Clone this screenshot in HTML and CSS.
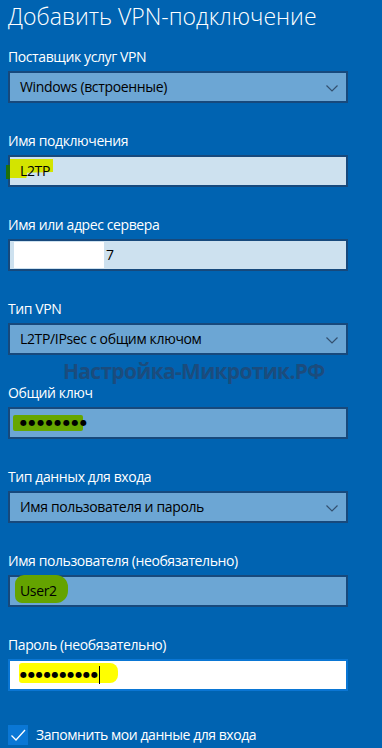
FILE: index.html
```html
<!DOCTYPE html>
<html lang="ru">
<head>
<meta charset="utf-8">
<title>Добавить VPN-подключение</title>
<link rel="stylesheet" href="styles.css">
</head>
<body>
<main class="page">
  <h1 class="title">Добавить VPN-подключение</h1>

  <div class="field">
    <div class="label">Поставщик услуг VPN</div>
    <div class="box select">
      <span class="value">Windows (встроенные)</span>
      <svg class="chev" width="12" height="7" viewBox="0 0 12 7"><path d="M0.5 0.5 L6 6 L11.5 0.5" fill="none" stroke="#34506e" stroke-width="1.2"/></svg>
    </div>
  </div>

  <div class="field">
    <div class="label">Имя подключения</div>
    <div class="box input light">
      <span class="hl hl-l2tp"></span>
      <span class="hl hl-l2tp-edge"></span>
      <span class="value">L2TP</span>
    </div>
  </div>

  <div class="field">
    <div class="label">Имя или адрес сервера</div>
    <div class="box input light">
      <span class="redact"></span><span class="value tail">7</span>
    </div>
  </div>

  <div class="field">
    <div class="label">Тип VPN</div>
    <div class="box select">
      <span class="value">L2TP/IPsec с общим ключом</span>
      <svg class="chev" width="12" height="7" viewBox="0 0 12 7"><path d="M0.5 0.5 L6 6 L11.5 0.5" fill="none" stroke="#34506e" stroke-width="1.2"/></svg>
    </div>
  </div>

  <div class="field">
    <div class="label">Общий ключ</div>
    <div class="box input">
      <span class="hl hl-key"></span>
      <span class="value dots">●●●●●●●●</span>
    </div>
  </div>

  <div class="field">
    <div class="label">Тип данных для входа</div>
    <div class="box select">
      <span class="value">Имя пользователя и пароль</span>
      <svg class="chev" width="12" height="7" viewBox="0 0 12 7"><path d="M0.5 0.5 L6 6 L11.5 0.5" fill="none" stroke="#34506e" stroke-width="1.2"/></svg>
    </div>
  </div>

  <div class="field">
    <div class="label">Имя пользователя (необязательно)</div>
    <div class="box input">
      <span class="hl hl-user"></span>
      <span class="value">User2</span>
    </div>
  </div>

  <div class="field last">
    <div class="label">Пароль (необязательно)</div>
    <div class="box input focus">
      <span class="hl hl-pass"></span>
      <span class="value dots pass">●●●●●●●●●●</span><span class="caret"></span>
    </div>
  </div>

  <div class="check">
    <span class="checkbox">
      <svg width="20" height="20" viewBox="0 0 20 20"><path d="M3.5 10.5 L8 15 L17 5" fill="none" stroke="#ffffff" stroke-width="1.3"/></svg>
    </span>
    <span class="check-text">Запомнить мои данные для входа</span>
  </div>

  <div class="watermark">Настройка-Микротик.РФ</div>
</main>
</body>
</html>
```

FILE: styles.css
```css
html, body {
  margin: 0;
  padding: 0;
  height: 100%;
  overflow: hidden;
}

body {
  background: #0063b1;
  font-family: "Open Sans", "Noto Sans", sans-serif;
  color: #ffffff;
}

.page {
  position: relative;
  padding: 0 0 0 8px;
}

.title {
  margin: 0 0 16px 0;
  height: 32px;
  font-weight: 300;
  font-size: 23px;
  line-height: 32px;
  letter-spacing: 0;
  color: #ffffff;
  white-space: nowrap;
}

.field {
  height: 84px;
  display: flex;
  flex-direction: column;
}

.field.last {
  height: 89px;
}

.label {
  height: 18px;
  line-height: 18px;
  font-size: 14px;
  letter-spacing: -0.4px;
  margin-bottom: 5px;
  white-space: nowrap;
}

.box {
  position: relative;
  box-sizing: border-box;
  width: 340px;
  height: 32px;
  border: 2px solid #17497c;
  background: #6ca6d4;
  display: flex;
  align-items: center;
  padding-left: 10px;
  color: #000000;
  font-size: 14px;
  letter-spacing: -0.35px;
}

.box.light {
  background: #cde1ef;
}

.box.focus {
  background: #ffffff;
  border-color: #0a76d4;
}

.value {
  position: relative;
  white-space: nowrap;
  line-height: 20px;
}

.select .chev {
  position: absolute;
  right: 8px;
  top: 12px;
}

.hl {
  position: absolute;
}

.hl-l2tp {
  left: 0;
  top: 2px;
  width: 43px;
  height: 19px;
  background: #d3e400;
  clip-path: polygon(0 0, 100% 0, 100% 68%, 40% 72%, 38% 100%, 0 100%);
}

.hl-l2tp-edge {
  left: -4px;
  top: 8px;
  width: 4px;
  height: 14px;
  background: #1f6f0a;
}

.redact {
  display: inline-block;
  width: 90px;
  height: 26px;
  margin-left: -6px;
  margin-right: 2px;
  background: #ffffff;
}

.hl-key {
  left: 3px;
  top: 6px;
  width: 70px;
  height: 16px;
  background: #66a600;
  border-radius: 2px;
}

.hl-user {
  left: 5px;
  top: -2px;
  width: 53px;
  height: 28px;
  background: #64a300;
  border-radius: 9px 12px 12px 7px;
}

.hl-pass {
  left: 9px;
  top: 2px;
  width: 99px;
  height: 20px;
  background: #ffff00;
  border-radius: 3px 8px 8px 3px;
}

.dots {
  font-family: "DejaVu Sans", sans-serif;
  font-size: 8px;
  letter-spacing: 1.6px;
  line-height: 12px;
}

.dots.pass {
  letter-spacing: 0.9px;
}

.caret {
  position: relative;
  display: inline-block;
  width: 1px;
  height: 18px;
  background: #000000;
  margin-left: 0;
}

.check {
  display: flex;
  align-items: center;
  gap: 8px;
  height: 20px;
}

.checkbox {
  width: 20px;
  height: 20px;
  background: #0a77d5;
  display: flex;
}

.check-text {
  font-size: 14px;
  letter-spacing: -0.45px;
  line-height: 20px;
  white-space: nowrap;
}

.watermark {
  position: absolute;
  left: 63px;
  top: 357px;
  font-size: 21px;
  line-height: 28px;
  font-weight: 700;
  letter-spacing: -0.7px;
  color: #1b4c7d;
  white-space: nowrap;
}
```
